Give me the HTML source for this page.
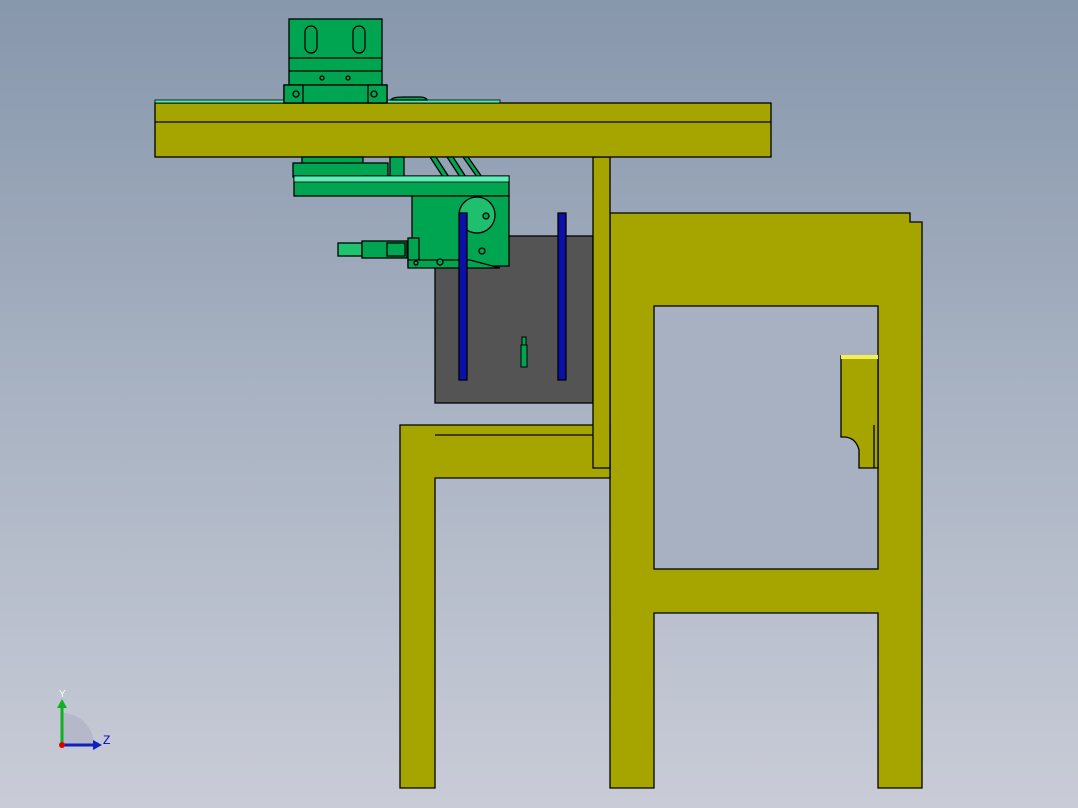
<!DOCTYPE html>
<html><head><style>
html,body{margin:0;padding:0}
body{width:1078px;height:808px;overflow:hidden;background:linear-gradient(#8797ac,#a9b3c3 50%,#c9ccd7);}
svg{position:absolute;left:0;top:0}
</style></head><body>
<svg width="1078" height="808" viewBox="0 0 1078 808" stroke="#000" stroke-width="1.3">
<g fill="#a6a500">
<!-- right frame -->
<path d="M610 213H910V222H922V788H878V613H654V788H610Z"/>
<rect x="654" y="306" width="224" height="263" fill="#a8b1c1"/>
<path d="M841 356H878V468H859V450Q856 438 845 437H841Z"/>
<rect x="841" y="355" width="37" height="4" fill="#f4f050" stroke="none"/>
<line x1="874" y1="425" x2="874" y2="468"/>
<!-- left frame -->
<path d="M400 425H610V478H435V788H400Z"/>
<line x1="435" y1="435" x2="610" y2="435"/>
</g>
<!-- gray plate -->
<rect x="435" y="236" width="158" height="167" fill="#545454"/>
<rect x="593" y="157" width="17" height="311" fill="#a6a500"/>
<!-- beam -->
<rect x="155" y="103" width="616" height="54" fill="#a6a500"/>
<line x1="155" y1="122" x2="771" y2="122"/>
<rect x="155" y="100" width="345" height="3" fill="#4ee8b0" stroke-width="0.8"/>
<g fill="#00a552">
<!-- top block -->
<rect x="289" y="19" width="93" height="66"/>
<line x1="289" y1="58" x2="382" y2="58"/><line x1="289" y1="71" x2="382" y2="71"/>
<rect x="305" y="26" width="12" height="27" rx="6"/><rect x="353" y="26" width="12" height="27" rx="6"/>
<circle cx="322" cy="78" r="2"/><circle cx="348" cy="78" r="2"/>
<rect x="284" y="85" width="103" height="18"/>
<rect x="284" y="85" width="19" height="18"/><rect x="368" y="85" width="19" height="18"/>
<circle cx="296" cy="94" r="3"/><circle cx="374" cy="94" r="3"/>
<path d="M391 100Q392 97 403 97H420Q426 97 427 100Z"/>
<!-- lower -->
<rect x="302" y="157" width="61" height="7"/>
<rect x="390" y="157" width="14" height="20"/>
<path d="M430 157L443 177H449L436 157ZM447 157L460 177H466L453 157ZM463 157L477 177H482L468 157Z"/>
<rect x="293" y="163" width="95" height="14"/>
<rect x="294" y="176" width="215" height="20"/>
<rect x="294" y="176" width="215" height="6" fill="#5cf0b8" stroke-width="0.8"/>
<path d="M412 196H509V266H412Z"/>
<circle cx="477" cy="215" r="18" fill="#1fbf70"/>
<circle cx="482" cy="251" r="3"/><circle cx="486" cy="216" r="3"/>
<rect x="338" y="243" width="24" height="13" fill="#1ec36d"/>
<rect x="362" y="241" width="45" height="17"/>
<rect x="387" y="243" width="18" height="13"/>
<rect x="408" y="238" width="11" height="28"/>
<path d="M408 260L470 260L500 268L408 268Z"/>
<circle cx="440" cy="262" r="3"/><circle cx="416" cy="263" r="2"/>
</g>
<g fill="#0a10a8" stroke="#000">
<rect x="459" y="213" width="8" height="167"/>
<rect x="558" y="213" width="8" height="167"/>
</g>
<rect x="521" y="345" width="6" height="22" fill="#00a552" stroke-width="1"/>
<rect x="522" y="337" width="4" height="8" fill="#00a552" stroke-width="1"/>
<!-- triad -->
<path d="M62 747V713A32 32 0 0 1 94 745Z" fill="#b4b8c8" stroke="none"/>
<line x1="62" y1="745" x2="62" y2="705" stroke="#10b020" stroke-width="3"/>
<path d="M57 708L62 699L67 708Z" fill="#10b020" stroke="none"/>
<line x1="62" y1="745" x2="95" y2="745" stroke="#1020c0" stroke-width="3"/>
<path d="M93 740L102 745L93 750Z" fill="#1020c0" stroke="none"/>
<circle cx="62" cy="745" r="3" fill="#d00" stroke="none"/>
<text x="59" y="697" font-family="Liberation Sans" font-size="10" fill="#fff" stroke="none">Y</text>
<text x="103" y="744" font-family="Liberation Sans" font-size="12" fill="#0000c0" stroke="none">Z</text>
</svg>
</body></html>
